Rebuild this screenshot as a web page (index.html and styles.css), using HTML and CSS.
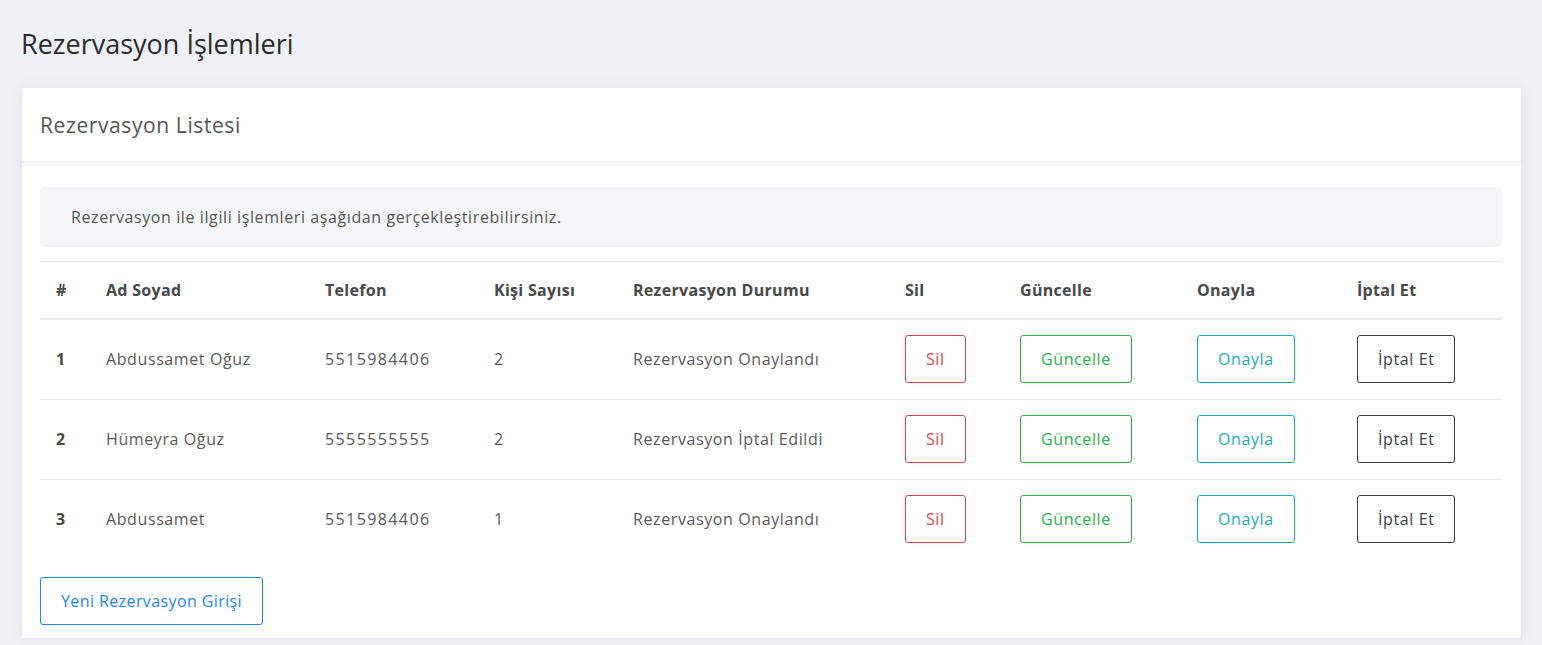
FILE: index.html
```html
<!DOCTYPE html>
<html lang="tr">
<head>
<meta charset="utf-8">
<title>Rezervasyon İşlemleri</title>
<link rel="stylesheet" href="styles.css">
</head>
<body>
<div class="page">
  <h1 class="page-title">Rezervasyon İşlemleri</h1>
  <div class="card">
    <div class="card-header">Rezervasyon Listesi</div>
    <div class="card-body">
      <div class="alert">Rezervasyon ile ilgili işlemleri aşağıdan gerçekleştirebilirsiniz.</div>
      <table class="table">
        <colgroup>
          <col class="c1"><col class="c2"><col class="c3"><col class="c4"><col class="c5"><col class="c6"><col class="c7"><col class="c8"><col class="c9">
        </colgroup>
        <thead>
          <tr><th>#</th><th>Ad Soyad</th><th>Telefon</th><th>Kişi Sayısı</th><th>Rezervasyon Durumu</th><th>Sil</th><th>Güncelle</th><th>Onayla</th><th>İptal Et</th></tr>
        </thead>
        <tbody>
          <tr><th>1</th><td>Abdussamet Oğuz</td><td class="num">5515984406</td><td class="num">2</td><td>Rezervasyon Onaylandı</td>
            <td><a class="btn btn-red">Sil</a></td><td><a class="btn btn-green">Güncelle</a></td><td><a class="btn btn-teal">Onayla</a></td><td><a class="btn btn-dark">İptal Et</a></td></tr>
          <tr><th>2</th><td>Hümeyra Oğuz</td><td class="num">5555555555</td><td class="num">2</td><td>Rezervasyon İptal Edildi</td>
            <td><a class="btn btn-red">Sil</a></td><td><a class="btn btn-green">Güncelle</a></td><td><a class="btn btn-teal">Onayla</a></td><td><a class="btn btn-dark">İptal Et</a></td></tr>
          <tr><th>3</th><td>Abdussamet</td><td class="num">5515984406</td><td class="num">1</td><td>Rezervasyon Onaylandı</td>
            <td><a class="btn btn-red">Sil</a></td><td><a class="btn btn-green">Güncelle</a></td><td><a class="btn btn-teal">Onayla</a></td><td><a class="btn btn-dark">İptal Et</a></td></tr>
        </tbody>
      </table>
      <a class="btn btn-blue">Yeni Rezervasyon Girişi</a>
    </div>
  </div>
</div>
</body>
</html>
```
FILE: styles.css
```css
html, body {
  margin: 0;
  padding: 0;
}
body {
  background: #f0f1f7;
  font-family: "Open Sans", "Lato", sans-serif;
  font-size: 16px;
  line-height: 24px;
  letter-spacing: 0.6px;
  color: #5a5a5a;
  height: 645px;
  overflow: hidden;
}
.page {
  padding: 25px 21px 0 22px;
}
.page-title {
  margin: 0 0 25px -1px;
  font-size: 27px;
  line-height: 38px;
  font-weight: 400;
  letter-spacing: 0;
  color: #2b2b2b;
}
.card {
  background: #fff;
  box-shadow: 0 0 14px rgba(80, 85, 120, 0.08);
}
.card-header {
  padding: 24px 18px 23px;
  font-size: 21px;
  line-height: 26px;
  color: #555;
  border-bottom: 1px solid #e8e9ee;
}
.card-body {
  padding: 25px 19px 13px 18px;
}
.alert {
  background: #f5f6f8;
  border-radius: 5px;
  padding: 18px 31px;
  color: #555;
  margin-bottom: 14px;
}
.table {
  width: 100%;
  border-collapse: collapse;
  table-layout: fixed;
  margin-bottom: 18px;
}
.c1 { width: 50px; }
.c2 { width: 219px; }
.c3 { width: 169px; }
.c4 { width: 139px; }
.c5 { width: 272px; }
.c6 { width: 115px; }
.c7 { width: 177px; }
.c8 { width: 160px; }
.c9 { width: 161px; }
.table th, .table td {
  padding: 15px 16px 16px;
  text-align: left;
  vertical-align: middle;
  border-top: 1px solid #e8e9ee;
}
.table thead th {
  padding: 16px 16px 16px;
  font-weight: 700;
  letter-spacing: 0.3px;
  color: #484848;
  border-bottom: 2px solid #e8e9ee;
}
.table tbody th {
  font-weight: 700;
  color: #484848;
}
.table tbody td {
  color: #5a5a5a;
}
.table tbody td.num {
  letter-spacing: 1.4px;
}
.btn {
  display: inline-block;
  padding: 11px 20px;
  border: 1px solid;
  border-radius: 3px;
  font-size: 16px;
  line-height: 24px;
  letter-spacing: 0.6px;
  cursor: pointer;
}
.btn-red { color: #e0424f; border-color: #e0424f; }
.btn-green { color: #2fb04b; border-color: #2fb04b; }
.btn-teal { color: #1fa9c0; border-color: #1fa9c0; }
.btn-dark { color: #3d3f45; border-color: #3d3f45; }
.btn-blue {
  color: #1e88f0;
  border-color: #1e88f0;
  letter-spacing: 0.4px;
}
```
